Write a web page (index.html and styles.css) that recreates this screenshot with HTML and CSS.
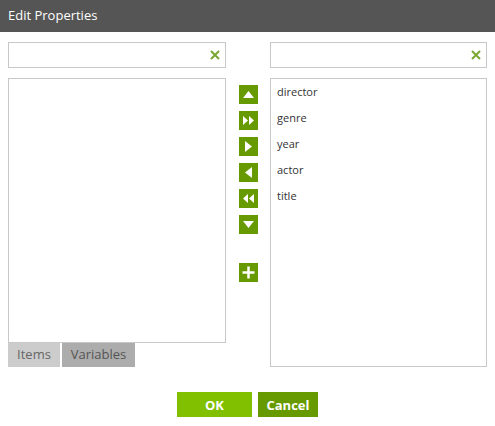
FILE: index.html
```html
<!DOCTYPE html>
<html lang="en">
<head>
  <meta charset="UTF-8" />
  <title>Edit Properties</title>
  <link rel="stylesheet" href="styles.css">
</head>
<body>
  <header class="titlebar">Edit Properties</header>
  <main class="panes">
    <section class="pane pane-left">
      <div class="search">
        <svg class="clear" viewBox="0 0 10 10"><path d="M1 1 L9 9 M9 1 L1 9" /></svg>
      </div>
      <div class="list list-left"></div>
      <div class="tabs">
        <span class="tab tab-active">Items</span>
        <span class="tab tab-vars">Variables</span>
      </div>
    </section>

    <div class="mover">
      <button class="icon-btn" title="Up"><svg viewBox="0 0 19 19"><path d="M4 13 L9.5 6 L15 13 Z" /></svg></button>
      <button class="icon-btn" title="Add all"><svg viewBox="0 0 19 19"><path d="M4 5 L9 9.5 L4 14 Z M10 5 L15 9.5 L10 14 Z" /></svg></button>
      <button class="icon-btn" title="Add"><svg viewBox="0 0 19 19"><path d="M6 4 L13 9.5 L6 15 Z" /></svg></button>
      <button class="icon-btn" title="Remove"><svg viewBox="0 0 19 19"><path d="M13 4 L6 9.5 L13 15 Z" /></svg></button>
      <button class="icon-btn" title="Remove all"><svg viewBox="0 0 19 19"><path d="M9 5 L4 9.5 L9 14 Z M15 5 L10 9.5 L15 14 Z" /></svg></button>
      <button class="icon-btn" title="Down"><svg viewBox="0 0 19 19"><path d="M4 6 L15 6 L9.5 13 Z" /></svg></button>
      <button class="icon-btn icon-plus" title="New"><svg viewBox="0 0 19 19"><path d="M8.25 3.5 H10.75 V8.25 H15.5 V10.75 H10.75 V15.5 H8.25 V10.75 H3.5 V8.25 H8.25 Z" /></svg></button>
    </div>

    <section class="pane pane-right">
      <div class="search">
        <svg class="clear" viewBox="0 0 10 10"><path d="M1 1 L9 9 M9 1 L1 9" /></svg>
      </div>
      <ul class="list list-right">
        <li>director</li>
        <li>genre</li>
        <li>year</li>
        <li>actor</li>
        <li>title</li>
      </ul>
    </section>
  </main>
  <footer class="actions">
    <button class="btn btn-ok">OK</button>
    <button class="btn btn-cancel">Cancel</button>
  </footer>
</body>
</html>
```

FILE: styles.css
```css
body {
  margin: 0;
  font-family: 'Open Sans', sans-serif;
  background: #ffffff;
  color: #333;
}

.titlebar {
  height: 32px;
  line-height: 31px;
  background: #555555;
  color: #ffffff;
  font-size: 13px;
  padding-left: 8px;
}

.panes {
  display: flex;
  padding: 10px 0 0 8px;
}

.pane {
  display: flex;
  flex-direction: column;
  flex-shrink: 0;
}

.pane-left {
  width: 218px;
}

.pane-right {
  width: 217px;
}

.search {
  position: relative;
  height: 26px;
  box-sizing: border-box;
  border: 1px solid #c8c8c8;
}

.clear {
  position: absolute;
  right: 5px;
  top: 7px;
  width: 10px;
  height: 10px;
}

.clear path {
  stroke: #78a832;
  stroke-width: 2;
  fill: none;
}

.list {
  margin: 10px 0 0 0;
  border: 1px solid #c8c8c8;
  box-sizing: border-box;
}

.list-left {
  height: 265px;
}

.list-right {
  height: 289px;
  list-style: none;
  padding: 2px 0 0 6px;
}

.list-right li {
  font-size: 11px;
  height: 26px;
  line-height: 22px;
  color: #333;
}

.tabs {
  display: flex;
  gap: 2px;
}

.tab {
  height: 24px;
  line-height: 22px;
  font-size: 13px;
  text-align: center;
  background: #cccccc;
  color: #666;
  width: 52px;
}

.tab-vars {
  width: 73px;
  background: #acacac;
  color: #555;
}

.mover {
  width: 44px;
  flex-shrink: 0;
  display: flex;
  flex-direction: column;
  align-items: center;
  gap: 7px;
  padding-top: 43px;
}

.icon-btn {
  width: 19px;
  height: 19px;
  padding: 0;
  border: none;
  background: #669a00;
  display: block;
}

.icon-btn svg {
  width: 19px;
  height: 19px;
  display: block;
}

.icon-btn path {
  fill: #ffffff;
}

.icon-plus {
  margin-top: 22px;
}

.actions {
  display: flex;
  justify-content: center;
  gap: 6px;
  padding-top: 25px;
}

.btn {
  height: 25px;
  border: none;
  color: #ffffff;
  font-family: inherit;
  font-weight: bold;
  font-size: 13px;
  padding: 0;
}

.btn-ok {
  width: 75px;
  background: #80c000;
}

.btn-cancel {
  width: 60px;
  background: #669a00;
}
```
